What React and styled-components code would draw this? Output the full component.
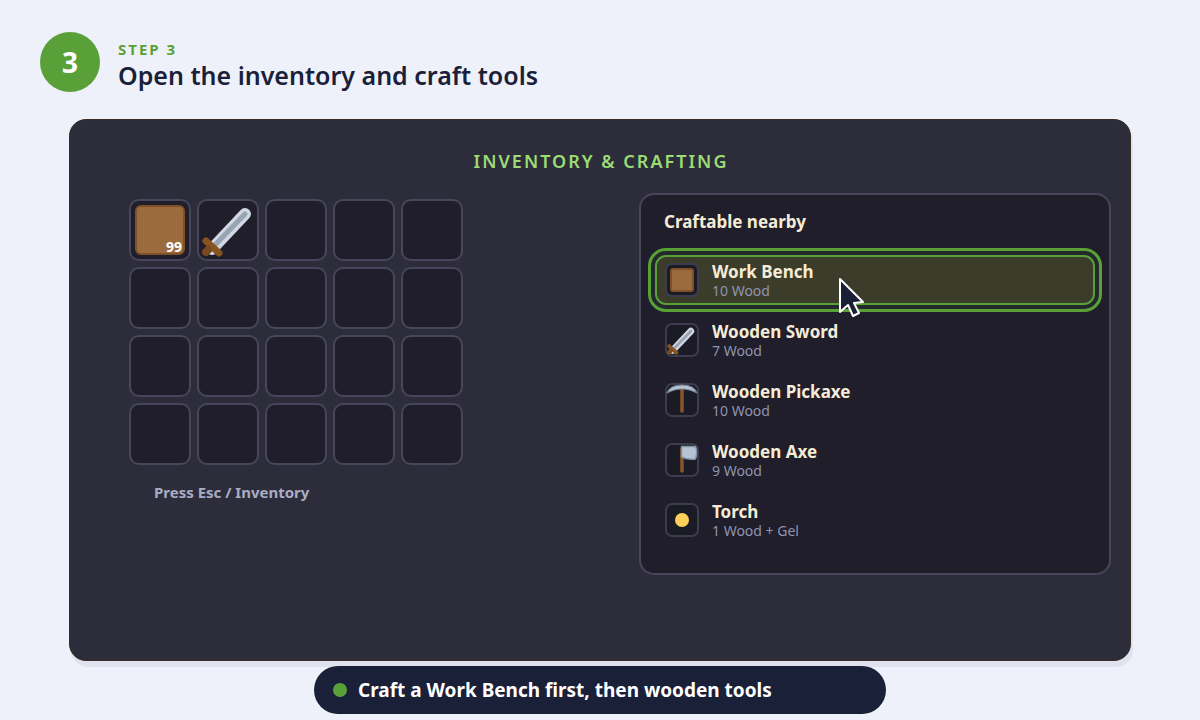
import React from 'react';

import styled, { createGlobalStyle, css } from 'styled-components';

const GlobalStyle = createGlobalStyle`
    * {
        box-sizing: border-box;
    }
    body {
        margin: 0;
        background: #eef1f9;
        font-family: "Noto Sans", "Open Sans", sans-serif;
    }
    h1, h2, h3, p, ul {
        margin: 0;
        padding: 0;
    }
`

const Page = styled.main`
    display: flex;
    flex-direction: column;
    min-height: 100vh;
    padding-top: 32px;
`

const Header = styled.header`
    display: flex;
    align-items: center;
    gap: 18px;
    padding: 0 40px;
`

const StepNumber = styled.div`
    display: flex;
    align-items: center;
    justify-content: center;
    width: 60px;
    height: 60px;
    border-radius: 50%;
    color: white;
    background: #5aa038;
    font-size: 28px;
    font-weight: 700;
`

const Heading = styled.div`
    padding-top: 4px;
`

const StepLabel = styled.p`
    color: #5aa038;
    font-size: 15px;
    line-height: 22px;
    font-weight: 700;
    letter-spacing: 2px;
`

const Title = styled.h1`
    color: #1b1f3a;
    font-size: 25px;
    line-height: 30px;
    font-weight: 650;
`

const Window = styled.section`
    display: flex;
    flex-direction: column;
    min-height: 542px;
    margin: 27px 69px 0;
    padding: 27px 19px 0 59px;
    border: 1px solid #3a2e22;
    border-radius: 17px;
    background: #2d2c3a;
    box-shadow: 2px 6px 0 #e0e3ef;
`

const WindowTitle = styled.h2`
    margin-right: 40px;
    padding-left: 2px;
    color: #9bdc74;
    font-size: 18px;
    line-height: 28px;
    font-weight: 650;
    letter-spacing: 2px;
    text-align: center;
`

const Columns = styled.div`
    display: flex;
    justify-content: space-between;
    align-items: flex-start;
    margin-top: 18px;
`

const Inventory = styled.div`
    padding-top: 6px;
`

const Grid = styled.ul`
    display: grid;
    grid-template-columns: repeat(5, 62px);
    grid-auto-rows: 62px;
    gap: 6px;
    list-style: none;
`

const Slot = styled.li`
    position: relative;
    border: 2px solid #47465b;
    border-radius: 10px;
    background: #1f1e2a;
    svg {
        display: block;
        width: 58px;
        height: 58px;
    }
`

const Count = styled.span`
    position: absolute;
    right: 7px;
    bottom: 3px;
    color: white;
    font-size: 14px;
    line-height: 18px;
    font-weight: 700;
`

const Hint = styled.p`
    margin-top: 17px;
    padding-left: 25px;
    color: #a9adc4;
    font-size: 15px;
    line-height: 20px;
    font-weight: 700;
`

const Crafting = styled.section`
    width: 472px;
    min-height: 382px;
    padding: 14px;
    border: 2px solid #47465b;
    border-radius: 15px;
    background: #1f1e2a;
`

const CraftingTitle = styled.h3`
    padding-left: 9px;
    color: #f5ecd7;
    font-size: 17px;
    line-height: 26px;
    font-weight: 700;
`

const Recipes = styled.ul`
    display: flex;
    flex-direction: column;
    gap: 10px;
    margin-top: 20px;
    list-style: none;
`

const Recipe = styled.button`
    position: relative;
    display: flex;
    align-items: center;
    gap: 13px;
    width: 100%;
    height: 50px;
    padding: 0 8px;
    border: 2px solid transparent;
    border-radius: 11px;
    background: none;
    font-family: inherit;
    text-align: left;
    cursor: pointer;
    ${props =>
        props.$active &&
        css`
        border-color: #5aa038;
        background: #3b3d2a;
        outline: 3px solid #5aa038;
        outline-offset: 4px;
        box-shadow: 0 0 0 4px #242a2b;
        `}
`

const RecipeIcon = styled.span`
    flex: none;
    width: 34px;
    height: 34px;
    border: 2px solid #3d3b4d;
    border-radius: 7px;
    background: #1b1b25;
    svg {
        display: block;
        width: 30px;
        height: 30px;
        overflow: visible;
    }
`

const RecipeText = styled.span`
    display: flex;
    flex-direction: column;
    padding-top: 2px;
`

const RecipeName = styled.span`
    color: #f5ecd7;
    font-size: 17px;
    line-height: 20px;
    font-weight: 700;
`

const RecipeCost = styled.span`
    color: #9094b0;
    font-size: 14px;
    line-height: 18px;
`

const Pointer = styled.svg`
    position: absolute;
    left: 181px;
    top: 19px;
    width: 30px;
    height: 44px;
    z-index: 1;
`

const Tip = styled.footer`
    display: flex;
    align-items: center;
    align-self: center;
    gap: 11px;
    width: 572px;
    max-width: 100%;
    height: 48px;
    margin: 5px 0 6px;
    padding: 0 19px;
    border-radius: 24px;
    color: white;
    background: #1b2039;
    font-size: 19px;
    font-weight: 700;
    z-index: 1;
`

const Dot = styled.span`
    width: 14px;
    height: 14px;
    border-radius: 50%;
    background: #5aa038;
`

const Block = () => (
    <svg viewBox="0 0 58 58" aria-hidden="true">
        <rect x="5" y="5" width="48" height="48" rx="5" fill="#9c6b3d" stroke="#7f5128" strokeWidth="2" />
    </svg>
)

const Sword = ({ viewBox = '0 0 58 58' }) => (
    <svg viewBox={viewBox} fill="none" strokeLinecap="round" aria-hidden="true">
        <path d="M13 48 46 13" stroke="#cfd8e3" strokeWidth="12" />
        <path d="M15 45 46 13" stroke="#98a3b3" strokeWidth="5" />
        <path d="M7 40 20 52" stroke="#87531f" strokeWidth="7" />
        <path d="M7 51 9 49" stroke="#774a22" strokeWidth="8" />
    </svg>
)

const SmallBlock = () => (
    <svg viewBox="0 0 30 30" aria-hidden="true">
        <rect x="4" y="4" width="22" height="22" rx="2" fill="#9c6b3d" stroke="#7f5128" strokeWidth="2" />
    </svg>
)

const Pickaxe = () => (
    <svg viewBox="0 0 30 30" fill="none" strokeLinecap="round" aria-hidden="true">
        <path d="M15 5V26" stroke="#87552b" strokeWidth="3.6" />
        <path d="M0 8Q3 0 15 0Q27 0 30 8Q15 0 0 8Z" fill="#b5c3d2" stroke="#748391" strokeWidth="1.2" strokeLinejoin="round" />
    </svg>
)

const Axe = () => (
    <svg viewBox="0 0 30 30" fill="none" strokeLinecap="round" aria-hidden="true">
        <path d="M15 4V26" stroke="#87552b" strokeWidth="3.6" />
        <path d="M14.5 1.5H28.5Q31 7 28.5 14Q21 15 14.5 12Z" fill="#b5c3d2" stroke="#8193a4" strokeWidth="1.4" />
    </svg>
)

const Flame = () => (
    <svg viewBox="0 0 30 30" aria-hidden="true">
        <circle cx="15" cy="15" r="7" fill="#ffcf5a" />
    </svg>
)

const recipes = [
    { name: 'Work Bench', cost: '10 Wood', icon: <SmallBlock /> },
    { name: 'Wooden Sword', cost: '7 Wood', icon: <Sword viewBox="3 2 54 54" /> },
    { name: 'Wooden Pickaxe', cost: '10 Wood', icon: <Pickaxe /> },
    { name: 'Wooden Axe', cost: '9 Wood', icon: <Axe /> },
    { name: 'Torch', cost: '1 Wood + Gel', icon: <Flame /> },
]

const App = () => {
    return (
        <>
            <GlobalStyle />
            <Page>
                <Header>
                    <StepNumber>3</StepNumber>
                    <Heading>
                        <StepLabel>STEP 3</StepLabel>
                        <Title>Open the inventory and craft tools</Title>
                    </Heading>
                </Header>
                <Window>
                    <WindowTitle>INVENTORY &amp; CRAFTING</WindowTitle>
                    <Columns>
                        <Inventory>
                            <Grid>
                                <Slot><Block /><Count>99</Count></Slot>
                                <Slot><Sword /></Slot>
                                {Array.from({ length: 18 }, (_, i) => <Slot key={i} />)}
                            </Grid>
                            <Hint>Press Esc / Inventory</Hint>
                        </Inventory>
                        <Crafting>
                            <CraftingTitle>Craftable nearby</CraftingTitle>
                            <Recipes>
                                {recipes.map((recipe, i) => (
                                    <li key={recipe.name}>
                                        <Recipe type="button" $active={i === 0}>
                                            <RecipeIcon>{recipe.icon}</RecipeIcon>
                                            <RecipeText>
                                                <RecipeName>{recipe.name}</RecipeName>
                                                <RecipeCost>{recipe.cost}</RecipeCost>
                                            </RecipeText>
                                            {i === 0 && (
                                                <Pointer viewBox="0 0 30 44" aria-hidden="true">
                                                    <path d="M2 3V36L10 29L15 40L21 37L16 27L25 26Z" fill="#1b2039" stroke="white" strokeWidth="2" strokeLinejoin="round" />
                                                </Pointer>
                                            )}
                                        </Recipe>
                                    </li>
                                ))}
                            </Recipes>
                        </Crafting>
                    </Columns>
                </Window>
                <Tip><Dot />Craft a Work Bench first, then wooden tools</Tip>
            </Page>
        </>
    )
}

export default App;
